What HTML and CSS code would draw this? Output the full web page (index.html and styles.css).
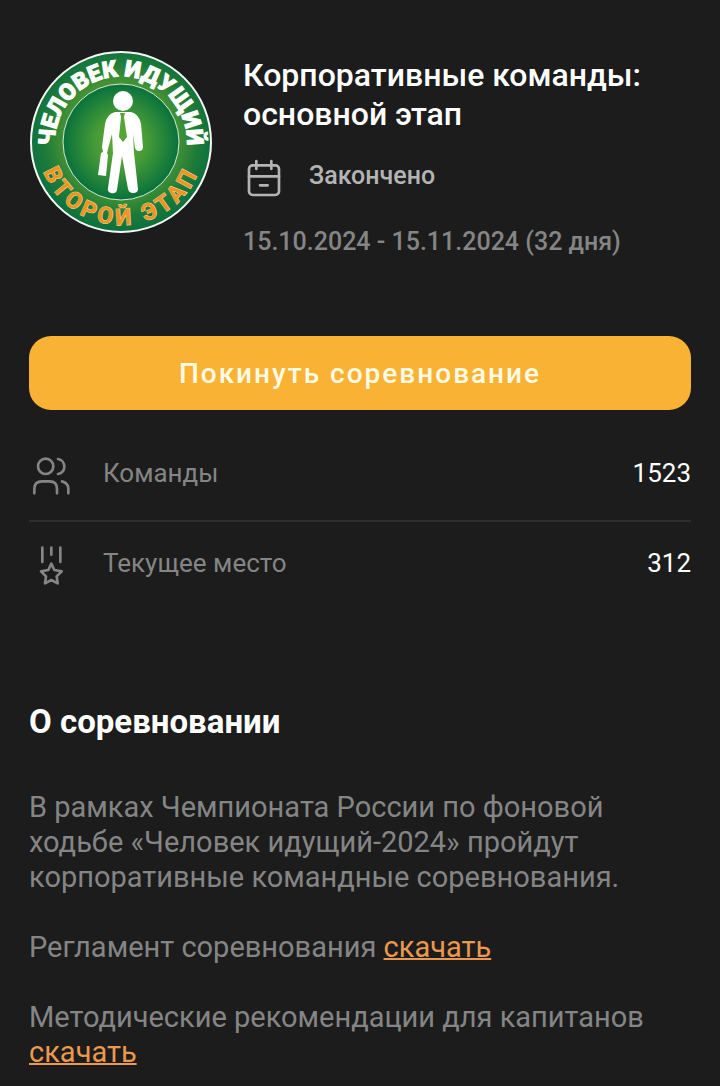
FILE: index.html
```
<!DOCTYPE html>
<html lang="ru">
<head>
    <meta charset="UTF-8">
    <meta name="viewport" content="width=device-width, initial-scale=1.0">
    <title>Корпоративные команды: основной этап</title>
    <link rel="stylesheet" href="styles.css">
</head>
<body>
    <main class="page">
        <header class="event">
            <svg class="logo" viewBox="0 0 184 184" role="img" aria-label="Человек идущий, второй этап">
                <defs>
                    <radialGradient id="ringFill" cx="50%" cy="48%" r="52%">
                        <stop offset="0.6" stop-color="#459235"/>
                        <stop offset="0.82" stop-color="#1d7b39"/>
                        <stop offset="1" stop-color="#0a7040"/>
                    </radialGradient>
                    <radialGradient id="innerFill">
                        <stop offset="0" stop-color="#67ac35"/>
                        <stop offset="0.45" stop-color="#469b36"/>
                        <stop offset="1" stop-color="#08713c"/>
                    </radialGradient>
                    <path id="topArc" d="M27 104 A66 66 0 1 1 157 104"/>
                    <path id="bottomArc" d="M9 92 A83 83 0 0 0 175 92"/>
                </defs>
                <circle cx="92" cy="92" r="90" fill="url(#ringFill)" stroke="#f4faf3" stroke-width="2"/>
                <circle cx="92" cy="92" r="58" fill="url(#innerFill)" stroke="#d5ead0" stroke-width="1"/>
                <text class="logo-top"><textPath href="#topArc" startOffset="50%">ЧЕЛОВЕК ИДУЩИЙ</textPath></text>
                <text class="logo-bottom"><textPath href="#bottomArc" startOffset="50%">ВТОРОЙ ЭТАП</textPath></text>
                <g fill="#fff">
                    <circle cx="94" cy="51" r="10"/>
                    <path d="M86 62 H102 Q110 64 112 74 L114 97 Q114 101 110 101 Q107 101 106 98 L104 84 L105 103 L109 139 Q109 143 104 143 Q100 143 99 139 L93 106 L88 140 Q87 144 82 143 Q78 142 79 138 L84 103 L83 84 L79 99 L78 103 L79 105 L77 126 L69 125 L72 103 L74 102 L73 97 L76 74 Q78 64 86 62 Z"/>
                </g>
                <path d="M91 63 H96 L95 67 L98 87 L94 92 L90 87 L92 67 Z" fill="#56a636"/>
            </svg>
            <div class="event-info">
                <h1>Корпоративные команды: основной этап</h1>
                <div class="status">
                    <svg class="icon" viewBox="9 24 126 126" aria-hidden="true">
                        <rect x="27" y="46" width="90" height="89" rx="11"/>
                        <path d="M49 33 V57 M94 33 V57 M27 79 H117 M60 106 H83"/>
                    </svg>
                    <span>Закончено</span>
                </div>
                <p class="dates">15.10.2024 - 15.11.2024 (32 дня)</p>
            </div>
        </header>

        <button class="leave" type="button">Покинуть соревнование</button>

        <dl class="stats">
            <div class="stat">
                <svg class="icon" viewBox="27 30 126 126" aria-hidden="true">
                    <circle cx="77" cy="64" r="23"/>
                    <path d="M43 145 V132 Q43 109 66 109 H89 Q111 109 111 132 V145"/>
                    <path d="M114 42 C126 44 133 54 133 65 S126 84 114 87 M126 109 C138 112 145 121 145 132 V145"/>
                </svg>
                <dt>Команды</dt>
                <dd>1523</dd>
            </div>
            <div class="stat">
                <svg class="icon" viewBox="27 300 126 126" aria-hidden="true">
                    <path d="M67 308 V351 M94 308 V329 M121 308 V351"/>
                    <path d="M94 356 L103 375 L125 379 L110 394 L113 415 L94 405 L75 415 L78 394 L63 379 L85 375 Z"/>
                </svg>
                <dt>Текущее место</dt>
                <dd>312</dd>
            </div>
        </dl>

        <section class="about">
            <h2>О соревновании</h2>
            <p>В рамках Чемпионата России по фоновой ходьбе «Человек идущий-2024» пройдут корпоративные командные соревнования.</p>
            <p>Регламент соревнования <a href="#">скачать</a></p>
            <p>Методические рекомендации для капитанов <a href="#">скачать</a></p>
        </section>
    </main>
</body>
</html>
```
FILE: styles.css
```
* {
    box-sizing: border-box;
}

body {
    margin: 0;
    background-color: #1c1c1c;
    color: #fff;
    font-family: Roboto, sans-serif;
    font-size: 26px;
}

h1, h2, p, dl, dt, dd {
    margin: 0;
}

.page {
    padding: 50px 29px 16px;
}

.event {
    display: flex;
    align-items: flex-start;
    gap: 30px;
}

.logo {
    flex: none;
    width: 184px;
    height: 184px;
}

.logo-top {
    font-family: Roboto, sans-serif;
    font-size: 23px;
    font-weight: 900;
    fill: #fff;
    stroke: #fff;
    stroke-width: 1px;
    text-anchor: middle;
}

.logo-bottom {
    font-family: Roboto, sans-serif;
    font-size: 23px;
    font-weight: 700;
    letter-spacing: 4px;
    fill: #f0941f;
    stroke: #f3d9a0;
    stroke-width: 1px;
    paint-order: stroke;
    text-anchor: middle;
}

.event-info {
    flex: 1;
    padding-top: 6px;
}

h1 {
    font-size: 32px;
    font-weight: 500;
    line-height: 39px;
}

.status {
    display: flex;
    align-items: flex-start;
    gap: 24px;
    margin-top: 24px;
    color: #b4b4b4;
    font-size: 25px;
    font-weight: 500;
    line-height: 36px;
}

.icon {
    flex: none;
    width: 42px;
    height: 42px;
    fill: none;
    stroke: currentColor;
    stroke-width: 8;
    stroke-linecap: round;
    stroke-linejoin: round;
}

.dates {
    margin-top: 24px;
    color: #858585;
    font-size: 25px;
    font-weight: 500;
    line-height: 36px;
}

.leave {
    display: block;
    width: 100%;
    height: 74px;
    margin-top: 76px;
    border: none;
    border-radius: 22px;
    background-color: #f9b233;
    color: #fffbe6;
    font-family: inherit;
    font-size: 28px;
    font-weight: 500;
    letter-spacing: 2px;
    cursor: pointer;
}

.stats {
    margin-top: 20px;
}

.stat {
    display: flex;
    align-items: flex-start;
    gap: 32px;
    height: 90px;
    padding-top: 25px;
    color: #858585;
    line-height: 36px;
}

.stat + .stat {
    padding-top: 23px;
    border-top: 2px solid #2e2e2e;
}

.stat dd {
    margin-left: auto;
    color: #fff;
}

.about {
    margin-top: 92px;
    color: #858585;
    font-size: 29px;
    line-height: 35px;
}

.about h2 {
    margin-bottom: 49px;
    color: #fff;
    font-size: 33px;
    font-weight: 700;
    line-height: 39px;
}

.about p + p {
    margin-top: 35px;
}

.about a {
    color: #ea994f;
    text-decoration-thickness: 2px;
}
```
